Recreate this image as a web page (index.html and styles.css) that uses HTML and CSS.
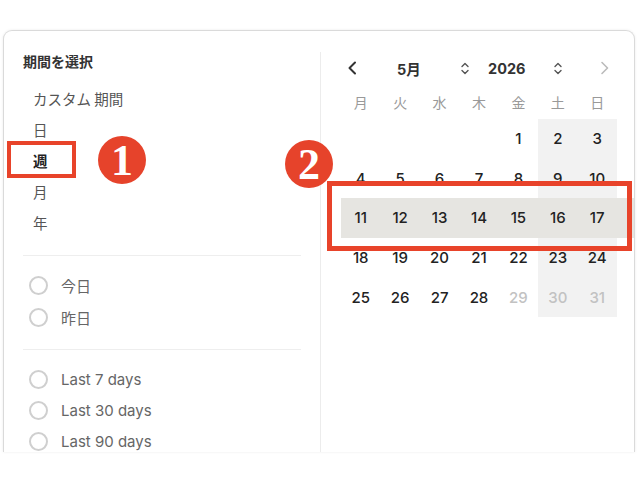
FILE: index.html
```html
<!DOCTYPE html>
<html lang="ja">
<head>
<meta charset="utf-8">
<link rel="stylesheet" href="styles.css">
</head>
<body>
<div class="card">
  <div class="left">
    <h2 class="title">期間を選択</h2>
    <ul class="menu">
      <li>カスタム 期間</li>
      <li>日</li>
      <li class="active">週</li>
      <li>月</li>
      <li>年</li>
    </ul>
    <div class="sep"></div>
    <ul class="radios first">
      <li><span class="radio"></span>今日</li>
      <li><span class="radio"></span>昨日</li>
    </ul>
    <div class="sep sep2"></div>
    <ul class="radios second">
      <li><span class="radio"></span>Last 7 days</li>
      <li><span class="radio"></span>Last 30 days</li>
      <li><span class="radio"></span>Last 90 days</li>
    </ul>
  </div>
  <div class="right">
    <div class="nav">
      <svg class="prev" width="10" height="14" viewBox="0 0 10 14"><path d="M8 1.5 L2.5 7 L8 12.5" fill="none" stroke="#333" stroke-width="2" stroke-linecap="round" stroke-linejoin="round"/></svg>
      <span class="month">5月</span>
      <svg class="updown" width="8" height="13" viewBox="0 0 8 13"><path d="M1 4.5 L4 1.5 L7 4.5 M1 8.5 L4 11.5 L7 8.5" fill="none" stroke="#555" stroke-width="1.4" stroke-linecap="round" stroke-linejoin="round"/></svg>
      <span class="year">2026</span>
      <svg class="updown" width="8" height="13" viewBox="0 0 8 13"><path d="M1 4.5 L4 1.5 L7 4.5 M1 8.5 L4 11.5 L7 8.5" fill="none" stroke="#555" stroke-width="1.4" stroke-linecap="round" stroke-linejoin="round"/></svg>
      <svg class="next" width="10" height="14" viewBox="0 0 10 14"><path d="M2 1.5 L7.5 7 L2 12.5" fill="none" stroke="#bbb" stroke-width="1.6" stroke-linecap="round" stroke-linejoin="round"/></svg>
    </div>
    <div class="weekdays">
      <span>月</span><span>火</span><span>水</span><span>木</span><span>金</span><span>土</span><span>日</span>
    </div>
    <div class="days">
      <div class="row"><span></span><span></span><span></span><span></span><span>1</span><span class="we">2</span><span class="we">3</span></div>
      <div class="row"><span>4</span><span>5</span><span>6</span><span>7</span><span>8</span><span class="we">9</span><span class="we">10</span></div>
      <div class="row sel"><span>11</span><span>12</span><span>13</span><span>14</span><span>15</span><span>16</span><span>17</span></div>
      <div class="row"><span>18</span><span>19</span><span>20</span><span>21</span><span>22</span><span class="we">23</span><span class="we">24</span></div>
      <div class="row"><span>25</span><span>26</span><span>27</span><span>28</span><span class="off">29</span><span class="we off">30</span><span class="we off">31</span></div>
    </div>
  </div>
</div>

<div class="mark mark-week"></div>
<div class="mark mark-row"></div>
<div class="badge badge1">1</div>
<div class="badge badge2">2</div>
</body>
</html>
```

FILE: styles.css
```css
html, body {
  margin: 0;
  padding: 0;
  background: #ffffff;
}
body {
  position: relative;
  width: 640px;
  height: 480px;
  overflow: hidden;
  font-family: "Inter", "Noto Sans CJK JP", sans-serif;
  color: #222;
}
.card {
  margin: 30px 0 0 3px;
  width: 632px;
  height: 422px;
  box-sizing: border-box;
  border: 1px solid #dadada;
  border-bottom: none;
  border-radius: 9px 9px 0 0;
  box-shadow: 0 0 3px rgba(0, 0, 0, 0.08);
  overflow: hidden;
  display: flex;
  background: #fff;
}
.left {
  width: 316px;
  flex: none;
  box-sizing: border-box;
  padding: 20px 19px 0 19px;
}
.title {
  margin: 0;
  font-size: 14px;
  line-height: 20px;
  font-weight: 700;
  color: #333;
  font-family: "Noto Sans CJK JP", sans-serif;
}
ul {
  list-style: none;
  margin: 0;
  padding: 0;
}
.menu {
  margin-top: 12px;
}
.menu li {
  height: 31px;
  line-height: 31px;
  padding-left: 10px;
  font-size: 14.5px;
  color: #555;
  font-family: "Noto Sans CJK JP", sans-serif;
}
.menu li.active {
  color: #222;
  font-weight: 700;
}
.sep {
  height: 1px;
  background: #eeeeee;
  margin: 17px 0 0 0;
  width: 278px;
}
.sep2 {
  margin-top: 16px;
}
.radios.first {
  margin-top: 13px;
}
.radios.first li {
  height: 32px;
}
.radios.second {
  margin-top: 14px;
}
.radios.second li {
  height: 31px;
}
.radios li {
  display: flex;
  align-items: center;
  font-size: 15px;
  color: #666;
  font-family: "Inter", "Noto Sans CJK JP", sans-serif;
}
.radio {
  width: 15px;
  height: 15px;
  border: 2px solid #cfcfcf;
  border-radius: 50%;
  margin: 0 13px 0 6px;
  flex: none;
}
.right {
  flex: 1;
  margin-top: 21px;
  border-left: 1px solid #ececec;
}
.nav {
  height: 32px;
  display: flex;
  align-items: center;
  padding-left: 26px;
}
.month, .year {
  font-size: 14.5px;
  font-weight: 700;
  color: #333;
  font-family: "Inter", "Noto Sans CJK JP", sans-serif;
}
.month {
  margin-left: 40px;
  width: 64px;
}
.year {
  margin-left: 19px;
  width: 66px;
}
.next {
  margin-left: 38px;
}
.weekdays, .row {
  display: grid;
  grid-template-columns: repeat(7, 39.43px);
  margin-left: 20px;
}
.weekdays {
  height: 35px;
  align-items: center;
}
.weekdays span {
  text-align: center;
  font-size: 14px;
  color: #999;
  font-family: "Noto Sans CJK JP", sans-serif;
}
.row {
  height: 39.6px;
}
.row span {
  display: flex;
  align-items: center;
  justify-content: center;
  font-size: 15px;
  font-weight: 500;
  color: #222;
}
.row span.we {
  background: #f2f2f2;
}
.row span.off {
  color: #c2c2c2;
}
.row.sel {
  background: #e6e5e1;
}
.mark {
  position: absolute;
  border: 5px solid #e8432a;
  box-sizing: border-box;
}
.mark-week {
  left: 7px;
  top: 141px;
  width: 69px;
  height: 37px;
  border-width: 4px;
}
.mark-row {
  left: 327px;
  top: 181px;
  width: 305px;
  height: 70px;
}
.badge {
  position: absolute;
  width: 48px;
  height: 48px;
  border-radius: 50%;
  background: #e6432b;
  color: #fff;
  font-family: "Liberation Serif", serif;
  font-weight: 700;
  font-size: 44px;
  line-height: 50px;
  text-align: center;
}
.badge1 {
  left: 98px;
  top: 136px;
}
.badge2 {
  left: 285px;
  top: 140px;
}
```
